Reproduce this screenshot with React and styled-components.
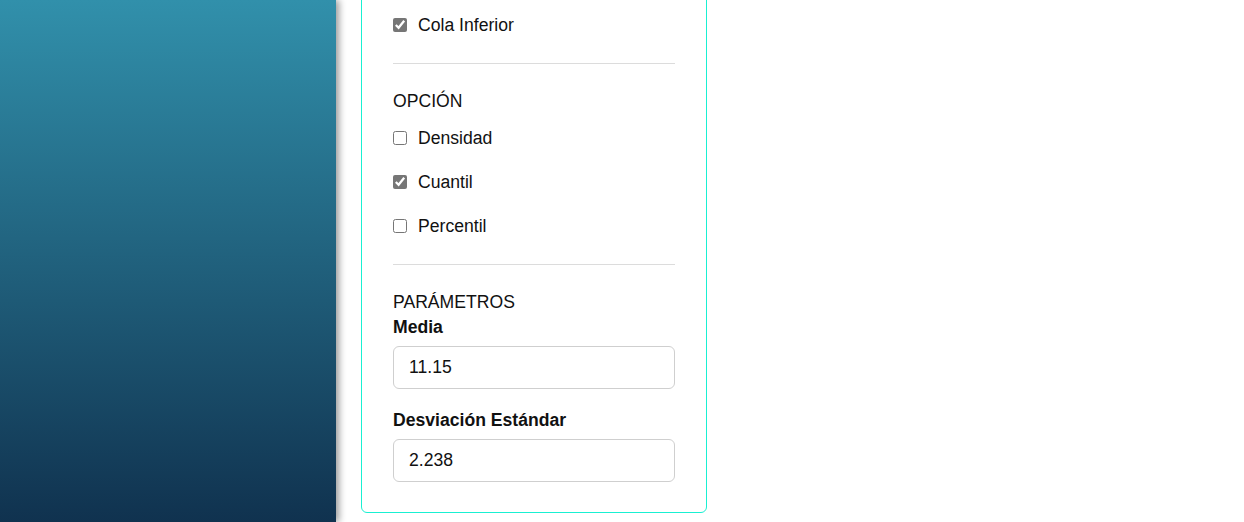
import React from "react";
import styled, { createGlobalStyle } from "styled-components";

const GlobalStyle = createGlobalStyle`
  html, body {
    margin: 0;
    padding: 0;
    background: #fff;
    font-family: "Liberation Sans", Arial, sans-serif;
    color: #111;
  }
  * {
    box-sizing: border-box;
  }
`;

const Layout = styled.div`
  display: flex;
  height: 100vh;
  overflow: hidden;
`;

const Sidebar = styled.aside`
  width: 336px;
  flex-shrink: 0;
  background: linear-gradient(to bottom, #3190ab, #10324f);
  box-shadow: 3px 0 7px rgba(0, 0, 0, 0.4);
  position: relative;
  z-index: 2;
`;

const Main = styled.main`
  flex: 1;
  display: flex;
  flex-direction: column;
  justify-content: flex-end;
  padding: 0 0 9px 25px;
`;

const Panel = styled.section`
  width: 346px;
  flex-shrink: 0;
  border: 1px solid #19f0d2;
  border-radius: 6px;
  padding: 48px 31px 30px;
  background: #fff;
`;

const Section = styled.div`
  display: flex;
  flex-direction: column;
`;

const Divider = styled.hr`
  border: none;
  border-top: 1px solid #dcdcdc;
  margin: 28px 0 27px;
`;

const Title = styled.div`
  font-size: 17.6px;
  line-height: 20px;
  text-transform: uppercase;
  margin-bottom: ${(p) => p.$gap || 17}px;
`;

const CheckRow = styled.label`
  display: flex;
  align-items: center;
  gap: 11px;
  font-size: 17.6px;
  line-height: 20px;
  & + & {
    margin-top: 24px;
  }
`;

const Check = styled.input.attrs({ type: "checkbox" })`
  width: 14px;
  height: 14px;
  margin: 0;
  accent-color: #767676;
`;

const Field = styled.div`
  display: flex;
  flex-direction: column;
  gap: 9px;
  & + & {
    margin-top: 21px;
  }
`;

const FieldLabel = styled.label`
  font-size: 17.6px;
  line-height: 20px;
  font-weight: 700;
`;

const TextInput = styled.input`
  height: 43px;
  width: 100%;
  border: 1px solid #cfcfcf;
  border-radius: 6px;
  padding: 0 15px;
  font-family: inherit;
  font-size: 17.6px;
  color: #111;
  outline: none;
`;

const ChoiceGroup = ({ title, items }) => (
  <Section>
    {title && <Title>{title}</Title>}
    {items.map((it) => (
      <CheckRow key={it.label}>
        <Check defaultChecked={it.checked} />
        {it.label}
      </CheckRow>
    ))}
  </Section>
);

export default function App() {
  return (
    <>
      <GlobalStyle />
      <Layout>
        <Sidebar />
        <Main>
          <Panel>
            <ChoiceGroup items={[{ label: "Cola Inferior", checked: true }]} />
            <Divider />
            <ChoiceGroup
              title="Opción"
              items={[
                { label: "Densidad", checked: false },
                { label: "Cuantil", checked: true },
                { label: "Percentil", checked: false },
              ]}
            />
            <Divider />
            <Section>
              <Title $gap={5}>Parámetros</Title>
              <Field>
                <FieldLabel>Media</FieldLabel>
                <TextInput defaultValue="11.15" />
              </Field>
              <Field>
                <FieldLabel>Desviación Estándar</FieldLabel>
                <TextInput defaultValue="2.238" />
              </Field>
            </Section>
          </Panel>
        </Main>
      </Layout>
    </>
  );
}
